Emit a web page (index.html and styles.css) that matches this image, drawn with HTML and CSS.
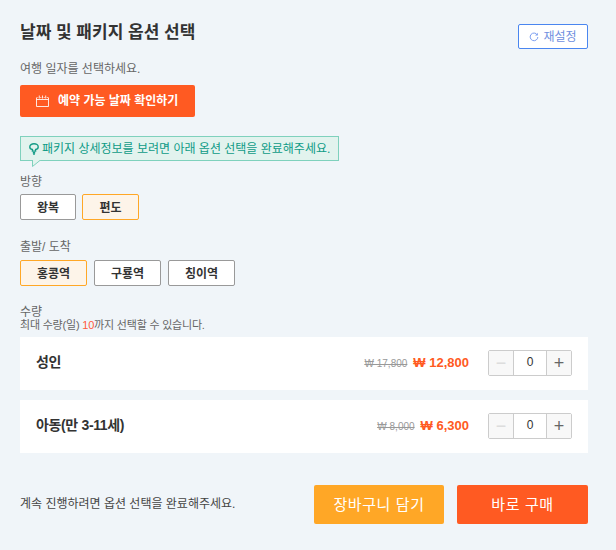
FILE: index.html
```html
<!DOCTYPE html>
<html lang="ko">
<head>
<meta charset="utf-8">
<title>날짜 및 패키지 옵션 선택</title>
<link rel="stylesheet" href="styles.css">
</head>
<body>
<main class="panel">
  <header class="head">
    <h1 class="title">날짜 및 패키지 옵션 선택</h1>
    <button class="reset">
      <svg class="reset-icon" viewBox="0 0 12 12" width="10" height="10"><path d="M9.9 3.4A4.6 4.6 0 1 0 10.6 6" fill="none" stroke="#7d9ff0" stroke-width="1.2"/><path d="M10.6 .8v3.4H7.2z" fill="#7d9ff0"/></svg>
      재설정
    </button>
  </header>

  <p class="hint">여행 일자를 선택하세요.</p>
  <button class="cal-btn">
    <svg class="cal-icon" viewBox="0 0 13 12" width="13" height="12"><path d="M.5 2.500v9h12v-9M.5 4.500h12M1.500 2.500h.7M4.300 2.500h1M7.700 2.500h1M10.800 2.500h1" fill="none" stroke="#fff" stroke-opacity=".85"/><path d="M3.300 .5v3M6.500 .5v3M9.700 .5v3" stroke="#fff" stroke-opacity=".85"/></svg>
    예약 가능 날짜 확인하기
  </button>

  <div class="tip">
    <svg class="tip-icon" viewBox="0 0 10 12" width="10" height="12"><path d="M5 .8C2.600.8.8 2.100.8 3.900c0 1.500 1 2.300 2.600 2.600v1.600h3.200V6.500C8.200 6.200 9.200 5.400 9.200 3.900 9.200 2.100 7.400.8 5 .8zM3.800 9.700h2.400M4.300 11.200h1.400" fill="none" stroke="#159c87" stroke-width="1.400"/></svg>
    패키지 상세정보를 보려면 아래 옵션 선택을 완료해주세요.
    <svg class="tip-tail" viewBox="0 0 10 8" width="10" height="8"><path d="M.5 0v6.500L8.500 0" fill="#e2f3ee" stroke="#7fd1bd"/></svg>
  </div>

  <section class="group group-dir">
    <div class="label">방향</div>
    <div class="options options-dir">
      <button class="opt opt-a">왕복</button>
      <button class="opt opt-b on">편도</button>
    </div>
  </section>

  <section class="group group-stn">
    <div class="label">출발/ 도착</div>
    <div class="options options-wide">
      <button class="opt opt-c on">홍콩역</button>
      <button class="opt opt-c">구룡역</button>
      <button class="opt opt-c">칭이역</button>
    </div>
  </section>

  <section class="qty">
    <div class="label">수량</div>
    <div class="sub">최대 수량(일) <em class="limit">10</em>까지 선택할 수 있습니다.</div>
    <div class="rows">
      <div class="row">
        <div class="name">성인</div>
        <div class="price"><s class="old">₩ 17,800</s><strong class="new">₩ 12,800</strong></div>
        <div class="stepper"><button class="step off">−</button><span class="count">0</span><button class="step">+</button></div>
      </div>
      <div class="row">
        <div class="name">아동(만 3-11세)</div>
        <div class="price"><s class="old">₩ 8,000</s><strong class="new">₩ 6,300</strong></div>
        <div class="stepper"><button class="step off">−</button><span class="count">0</span><button class="step">+</button></div>
      </div>
    </div>
  </section>

  <footer class="foot">
    <p class="foot-note">계속 진행하려면 옵션 선택을 완료해주세요.</p>
    <div class="actions">
      <button class="cta cart">장바구니 담기</button>
      <button class="cta buy">바로 구매</button>
    </div>
  </footer>
</main>
</body>
</html>
```
FILE: styles.css
```css
* { box-sizing: border-box; }
html, body { margin: 0; height: 100%; }
body {
  background: #f0f5f9;
  font-family: "Liberation Sans", "Noto Sans CJK KR", sans-serif;
  color: #333;
  overflow: hidden;
}
button { font-family: inherit; cursor: pointer; padding: 0; }
.panel { padding: 24px 28px 0 20px; width: 616px; }
.head { display: flex; justify-content: space-between; align-items: flex-start; height: 25px; }
.title { margin: -1px 0 0; font-size: 17px; line-height: 20px; font-weight: 700; color: #333; }
.reset {
  width: 70px; height: 25px; background: #fff; border: 1px solid #4a86f0; border-radius: 2px; padding-bottom: 3px;
  color: #6f8fe0; font-size: 12px; display: flex; align-items: center; justify-content: center; gap: 4px;
}
.reset-icon { margin-top: 4px; }
.hint { margin: 12px 0 0; font-size: 12px; line-height: 16px; color: #666; }
.cal-btn {
  margin-top: 8px; width: 175px; height: 32px; background: #ff5a22; color: #fff; border: 0; border-radius: 2px;
  font-size: 12px; font-weight: 700; display: flex; align-items: center; padding: 0 0 3px 16px; gap: 9px;
}
.cal-icon { margin-top: 3px; }
.tip {
  position: relative; margin-top: 19px; width: 319px; height: 25px; background: #e2f3ee; border: 1px solid #7fd1bd;
  color: #0e9b86; font-size: 12px; display: flex; align-items: center; padding: 0 0 3px 8px; gap: 3px; white-space: nowrap;
}
.tip-icon { margin-top: 3px; }
.tip-tail { position: absolute; left: 11px; top: 23px; }
.label { font-size: 12px; line-height: 14px; color: #666; }
.group-dir { margin-top: 14px; }
.group-stn { margin-top: 20px; }
.options { display: flex; gap: 6px; margin-top: 6px; }
.options-dir { margin-top: 5px; }
.options-wide { gap: 7px; }
.opt {
  height: 26px; background: #fff; border: 1px solid #999; border-radius: 2px; padding-bottom: 2px; font-size: 12px; font-weight: 700; color: #333;
}
.opt-a { width: 56px; }
.opt-b { width: 57px; }
.opt-c { width: 67px; }
.opt.on { background: #fdf4e9; border-color: #ffa726; }
.qty { margin-top: 19px; }
.sub { font-size: 11px; line-height: 12px; color: #666; letter-spacing: -.2px; }
.limit { font-style: normal; color: #ff5a3c; }
.rows { display: flex; flex-direction: column; gap: 10px; margin-top: 6px; }
.row { height: 53px; background: #fff; display: flex; align-items: center; padding: 0 16px 2px; }
.name { font-size: 14px; font-weight: 700; color: #333; flex: 1; padding-bottom: 4px; letter-spacing: -.35px; }
.price { display: flex; align-items: baseline; gap: 6px; margin-right: 19px; }
.old { font-size: 10px; color: #999; }
.new { font-size: 13px; font-weight: 700; color: #ff5a22; }
.stepper { display: flex; width: 84px; height: 26px; border: 1px solid #ccc; border-radius: 2px; background: #fff; }
.step { width: 24px; border: 0; background: #f8f8f8; color: #666; font-size: 18px; line-height: 1; }
.step.off { color: #ddd; }
.count { flex: 1; border: solid #ccc; border-width: 0 1px; text-align: center; font-size: 12px; line-height: 22px; color: #333; }
.foot { display: flex; justify-content: space-between; align-items: center; margin-top: 32px; height: 39px; }
.foot-note { margin: 0 0 4px; font-size: 12px; color: #444; }
.actions { display: flex; gap: 13px; }
.cta { width: 130px; height: 39px; border: 0; border-radius: 2px; padding-bottom: 3px; color: #fff; font-size: 15px; letter-spacing: .6px; }
.cart { background: #ffa726; }
.buy { background: #ff5a22; width: 131px; }
```
